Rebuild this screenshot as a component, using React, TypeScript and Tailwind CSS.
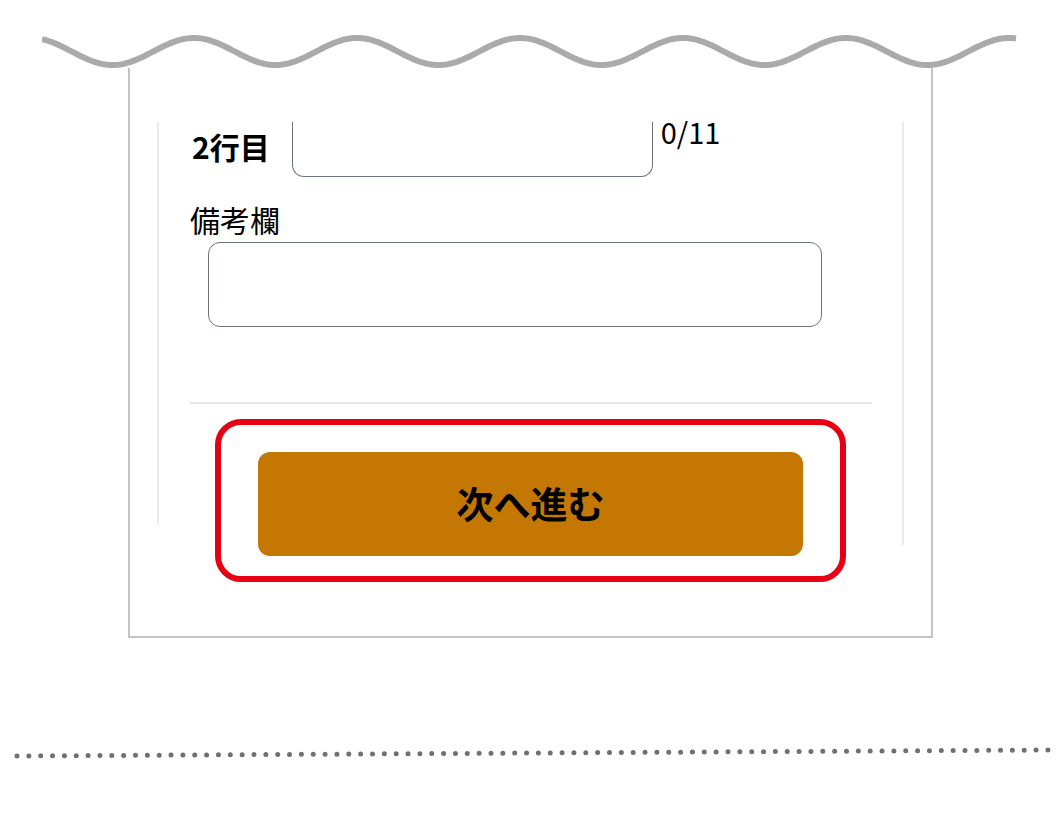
import React from "react";

function wavePoints(): string {
  const pts: string[] = [];
  for (let x = 0; x <= 975; x += 2) {
    const y = 19.5 - 13.5 * Math.cos((2 * Math.PI * (x + 11)) / 163);
    pts.push(`${x},${y.toFixed(2)}`);
  }
  return pts.join(" ");
}

export default function App() {
  return (
    <div
      className="w-[1060px] h-[816px] bg-white overflow-hidden"
      style={{ fontFamily: '"Noto Sans CJK JP", "Noto Sans", sans-serif' }}
    >
      <div className="pt-[32px] flex flex-col">
        <svg
          width="975"
          height="40"
          className="ml-[42px] relative z-10 block"
          viewBox="0 0 975 40"
        >
          <polyline points={wavePoints()} fill="none" stroke="#aaaaaa" strokeWidth="6" />
        </svg>
        <div className="ml-[128px] w-[805px] -mt-[4px] border-x-2 border-b-2 border-[#c4c4c4] pt-[54px] pb-[54px] pl-[27px] pr-[27px] flex flex-row items-start">
          <div className="w-[2px] h-[403px] bg-[#ebebeb] shrink-0" />
          <div className="flex-1 flex flex-col">
            <div className="flex flex-row items-start h-[55px]">
              <div className="ml-[33px] mt-0 text-[30px] font-bold leading-[48px] text-black">2行目</div>
              <div className="ml-[22px] w-[361px] h-[55px] border-x border-b border-[#6b7280] rounded-b-[12px]" />
              <div className="ml-[8px] -mt-[13px] text-[29px] leading-[44px] text-black">0/11</div>
            </div>
            <div className="ml-[31px] mt-[22px] text-[30px] leading-[40px] text-black">備考欄</div>
            <div className="ml-[49px] mt-[3px] w-[614px] h-[85px] border border-[#6b7280] rounded-[12px]" />
            <div className="ml-[31px] mt-[75px] w-[682px] h-[2px] bg-[#e5e7eb]" />
            <div className="ml-[56px] mt-[15px] w-[631px] h-[163px] border-[6px] border-[#e60012] rounded-[26px] pl-[37px] pt-[27px]">
              <div className="w-[545px] h-[104px] bg-[#c47702] rounded-[12px] flex items-center justify-center text-[37px] font-bold text-black">
                次へ進む
              </div>
            </div>
          </div>
          <div className="w-[2px] h-[423px] bg-[#ebebeb] shrink-0" />
        </div>
        <svg width="1060" height="20" className="mt-[103px] block" viewBox="0 0 1060 20">
          <line
            x1="17"
            y1="15"
            x2="1048"
            y2="9"
            stroke="#707070"
            strokeWidth="5"
            strokeLinecap="round"
            strokeDasharray="0 11.85"
          />
        </svg>
      </div>
    </div>
  );
}
